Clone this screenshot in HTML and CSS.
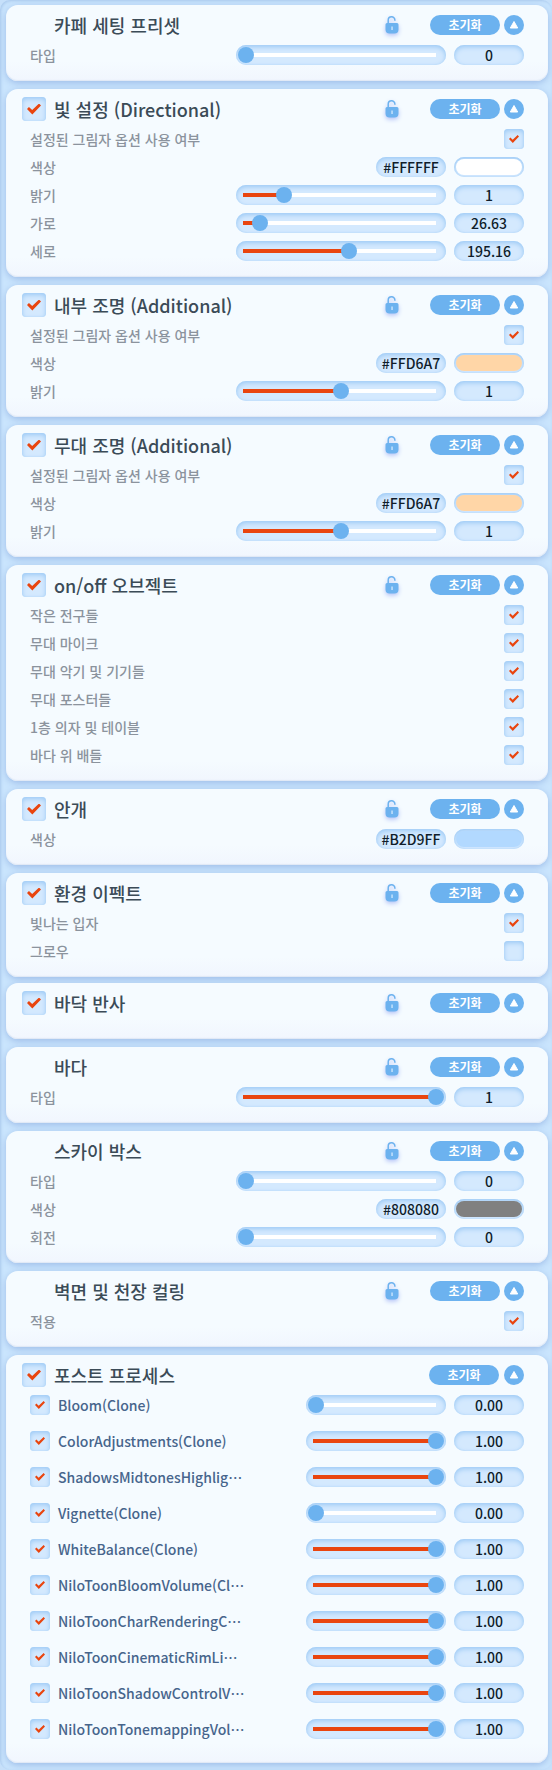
FILE: index.html
```
<!DOCTYPE html>
<html lang="ko">
<head>
  <meta charset="UTF-8" />
  <meta name="viewport" content="width=device-width, initial-scale=1" />
  <title>카페 세팅</title>
  <link rel="stylesheet" href="styles.css">
</head>
<body>
  <main class="panel" id="panel"></main>

  <!-- Shared card header -->
  <template id="cardTemplate">
    <section class="card">
      <header class="card-header">
        <input type="checkbox" class="check check-large" checked />
        <h2></h2>
        <button type="button" class="lock" aria-label="잠금">
          <svg viewBox="0 0 14 18" width="14" height="18">
            <path d="M3.200 8V4.200a3.300 3.300 0 0 1 6.700 0V4.800" fill="none" stroke="#6cb2ef" stroke-width="1.500" />
            <path d="M2 7h10a1.500 1.500 0 0 1 1.500 1.500v5a4 4 0 0 1-4 4h-5a4 4 0 0 1-4-4v-5A1.500 1.500 0 0 1 2 7z" fill="#6cb2ef" />
            <path d="M6.300 10.500h1.500v3.500h-1.500z" fill="#c5e2fc" />
          </svg>
        </button>
        <button type="button" class="reset">초기화</button>
        <button type="button" class="fold" aria-label="접기">
          <svg viewBox="0 0 20 20" width="20" height="20">
            <path d="M10 6.500L13.700 13H6.300z" fill="#fff" stroke="#fff" stroke-linejoin="round" />
          </svg>
        </button>
      </header>
      <div class="rows"></div>
    </section>
  </template>

  <script src="script.js"></script>
</body>
</html>
```
FILE: styles.css
```
* {
  box-sizing: border-box;
}

body {
  margin: 0;
  background: #c6e0fa;
  color: #3b4b57;
  font-family: "Noto Sans CJK KR", "Noto Sans", sans-serif;
  font-weight: 500;
}

.panel {
  display: flex;
  flex-direction: column;
  gap: 8px;
  padding: 5px 4px 7px 6px;
  border-radius: 10px;
  background: #cae5fd;
  box-shadow: inset 1px 1px 3px #a9c8ec;
}

.card {
  padding-bottom: 16px;
  border-radius: 12px;
  background: linear-gradient(to top, #f1f6fe, #f5fbff 20px);
  box-shadow: 0 2px 7px #9dbce8, inset 0 -1px 1px #dfe8f5;
}

.card-empty {
  margin-top: -2px;
}

.card-header {
  display: flex;
  align-items: center;
  height: 40px;
  padding: 0 24px 0 16px;
}

h2 {
  flex: 1;
  margin: 0 0 0 8px;
  font-size: 18px;
  font-weight: 500;
  line-height: 24px;
  white-space: nowrap;
}

.no-toggle h2 {
  margin-left: 32px;
}

button {
  padding: 0;
  border: none;
  background: #6cb2ef;
  color: #fff;
  font-family: inherit;
  cursor: pointer;
}

button svg {
  display: block;
}

.lock {
  margin-right: 31px;
  background: none;
  filter: drop-shadow(0 2px 2px #b5c4f7);
}

.reset {
  width: 70px;
  height: 20px;
  margin-right: 4px;
  border-radius: 10px;
  font-size: 12px;
  font-weight: 700;
  line-height: 20px;
}

.fold {
  width: 20px;
  height: 20px;
  border-radius: 50%;
}

.rows {
  display: flex;
  flex-direction: column;
  gap: 8px;
  padding: 0 24px;
}

.row {
  display: flex;
  align-items: center;
  gap: 8px;
  height: 20px;
}

.row label {
  flex: 1;
  color: #8b939d;
  font-size: 14px;
  line-height: 20px;
  white-space: nowrap;
}

/* Sunken look shared by every field */
.check,
.slider,
.value,
.swatch {
  appearance: none;
  height: 20px;
  margin: 0;
  border: none;
  border-radius: 10px;
  background-color: #d4e9fe;
  box-shadow: inset 0 2px 5px #9dcaf5, inset 0 0 2px #b9daf9;
}

.check {
  display: grid;
  place-items: center;
  width: 20px;
  border-radius: 4px;
}

.check-large {
  width: 24px;
  height: 24px;
}

.check:checked::before {
  content: "";
  width: 10px;
  height: 8px;
  background: #e9450f;
  clip-path: polygon(0 50%, 14% 32%, 37% 60%, 86% 0, 100% 18%, 38% 100%);
}

.check-large:checked::before {
  width: 14px;
  height: 11px;
}

.slider {
  width: 210px;
  padding: 0 2px;
}

.slider::-webkit-slider-runnable-track {
  height: 16px;
  background:
    linear-gradient(#e9450f, #e9450f) 5px center / calc((100% - 16px) * var(--fill) + 3px) 4px no-repeat,
    linear-gradient(#fff, #fff) 5px center / calc(100% - 13px) 4px no-repeat;
}

.slider::-webkit-slider-thumb {
  appearance: none;
  width: 16px;
  height: 16px;
  border-radius: 50%;
  background: #6cb2ef;
}

.value {
  width: 70px;
  padding: 0;
  color: #0f1d2b;
  font: inherit;
  font-size: 14px;
  line-height: 20px;
  text-align: center;
}

.swatch {
  width: 70px;
  padding: 2px;
}

.swatch::-webkit-color-swatch-wrapper {
  padding: 0;
}

.swatch::-webkit-color-swatch {
  border: none;
  border-radius: 8px;
}

.post {
  padding-bottom: 24px;
}

.post .lock {
  display: none;
}

.post .reset {
  margin-right: 5px;
}

.post .rows {
  gap: 16px;
}

.post .row label {
  color: #47658c;
}

.post .slider {
  width: 140px;
}
```
FILE: script.js
```
const check = (label, on = true) => ({ type: "check", label, on });
const color = (label, hex) => ({ type: "color", label, hex });
const slider = (label, value, max) => ({ type: "slider", label, value, max });
const effect = (label, value) => ({ type: "effect", label, value, max: 1 });

const SHADOW = "설정된 그림자 옵션 사용 여부";

const cards = [
  { title: "카페 세팅 프리셋", toggle: false, rows: [slider("타입", "0", 5)] },
  {
    title: "빛 설정 (Directional)",
    toggle: true,
    rows: [
      check(SHADOW),
      color("색상", "#FFFFFF"),
      slider("밝기", "1", 5),
      slider("가로", "26.63", 360),
      slider("세로", "195.16", 360),
    ],
  },
  {
    title: "내부 조명 (Additional)",
    toggle: true,
    rows: [check(SHADOW), color("색상", "#FFD6A7"), slider("밝기", "1", 2)],
  },
  {
    title: "무대 조명 (Additional)",
    toggle: true,
    rows: [check(SHADOW), color("색상", "#FFD6A7"), slider("밝기", "1", 2)],
  },
  {
    title: "on/off 오브젝트",
    toggle: true,
    rows: [
      check("작은 전구들"),
      check("무대 마이크"),
      check("무대 악기 및 기기들"),
      check("무대 포스터들"),
      check("1층 의자 및 테이블"),
      check("바다 위 배들"),
    ],
  },
  { title: "안개", toggle: true, rows: [color("색상", "#B2D9FF")] },
  { title: "환경 이펙트", toggle: true, rows: [check("빛나는 입자"), check("그로우", false)] },
  { title: "바닥 반사", toggle: true, rows: [] },
  { title: "바다", toggle: false, rows: [slider("타입", "1", 1)] },
  {
    title: "스카이 박스",
    toggle: false,
    rows: [slider("타입", "0", 5), color("색상", "#808080"), slider("회전", "0", 360)],
  },
  { title: "벽면 및 천장 컬링", toggle: false, rows: [check("적용")] },
  {
    title: "포스트 프로세스",
    toggle: true,
    post: true,
    rows: [
      effect("Bloom(Clone)", "0.00"),
      effect("ColorAdjustments(Clone)", "1.00"),
      effect("ShadowsMidtonesHighlig…", "1.00"),
      effect("Vignette(Clone)", "0.00"),
      effect("WhiteBalance(Clone)", "1.00"),
      effect("NiloToonBloomVolume(Cl…", "1.00"),
      effect("NiloToonCharRenderingC…", "1.00"),
      effect("NiloToonCinematicRimLi…", "1.00"),
      effect("NiloToonShadowControlV…", "1.00"),
      effect("NiloToonTonemappingVol…", "1.00"),
    ],
  },
];

function rowHtml(row, id) {
  const label = `<label for="${id}">${row.label}</label>`;
  if (row.type === "check") {
    return `${label}<input type="checkbox" class="check" id="${id}" ${row.on ? "checked" : ""} />`;
  }
  if (row.type === "color") {
    return `${label}
      <input type="text" class="value" id="${id}" value="${row.hex}" />
      <input type="color" class="swatch" value="${row.hex.toLowerCase()}" aria-label="${row.label}" />`;
  }
  const range = `<input type="range" class="slider" id="${id}" min="0" max="${row.max}" step="any"
      value="${row.value}" style="--fill: ${row.value / row.max}" />
    <input type="text" class="value" value="${row.value}" aria-label="${row.label}" />`;
  if (row.type === "effect") {
    return `<input type="checkbox" class="check" checked aria-label="${row.label}" />${label}${range}`;
  }
  return label + range;
}

const panel = document.getElementById("panel");
const template = document.getElementById("cardTemplate");

cards.forEach((data, i) => {
  const card = template.content.cloneNode(true).querySelector(".card");
  const toggle = card.querySelector(".check-large");
  card.querySelector("h2").textContent = data.title;
  toggle.setAttribute("aria-label", data.title);

  if (!data.toggle) {
    toggle.remove();
    card.classList.add("no-toggle");
  }
  if (data.post) card.classList.add("post");
  if (!data.rows.length) card.classList.add("card-empty");

  const rows = card.querySelector(".rows");
  data.rows.forEach((row, j) => {
    const el = document.createElement("div");
    el.className = "row";
    el.innerHTML = rowHtml(row, `field-${i}-${j}`);
    rows.appendChild(el);
  });

  card.querySelector(".fold").addEventListener("click", () => {
    rows.style.display = rows.style.display === "none" ? "" : "none";
  });

  panel.appendChild(card);
});

panel.addEventListener("input", (e) => {
  if (!e.target.matches(".slider")) return;
  e.target.style.setProperty("--fill", e.target.value / e.target.max);
  e.target.nextElementSibling.value = Number(e.target.value).toFixed(2);
});
```
